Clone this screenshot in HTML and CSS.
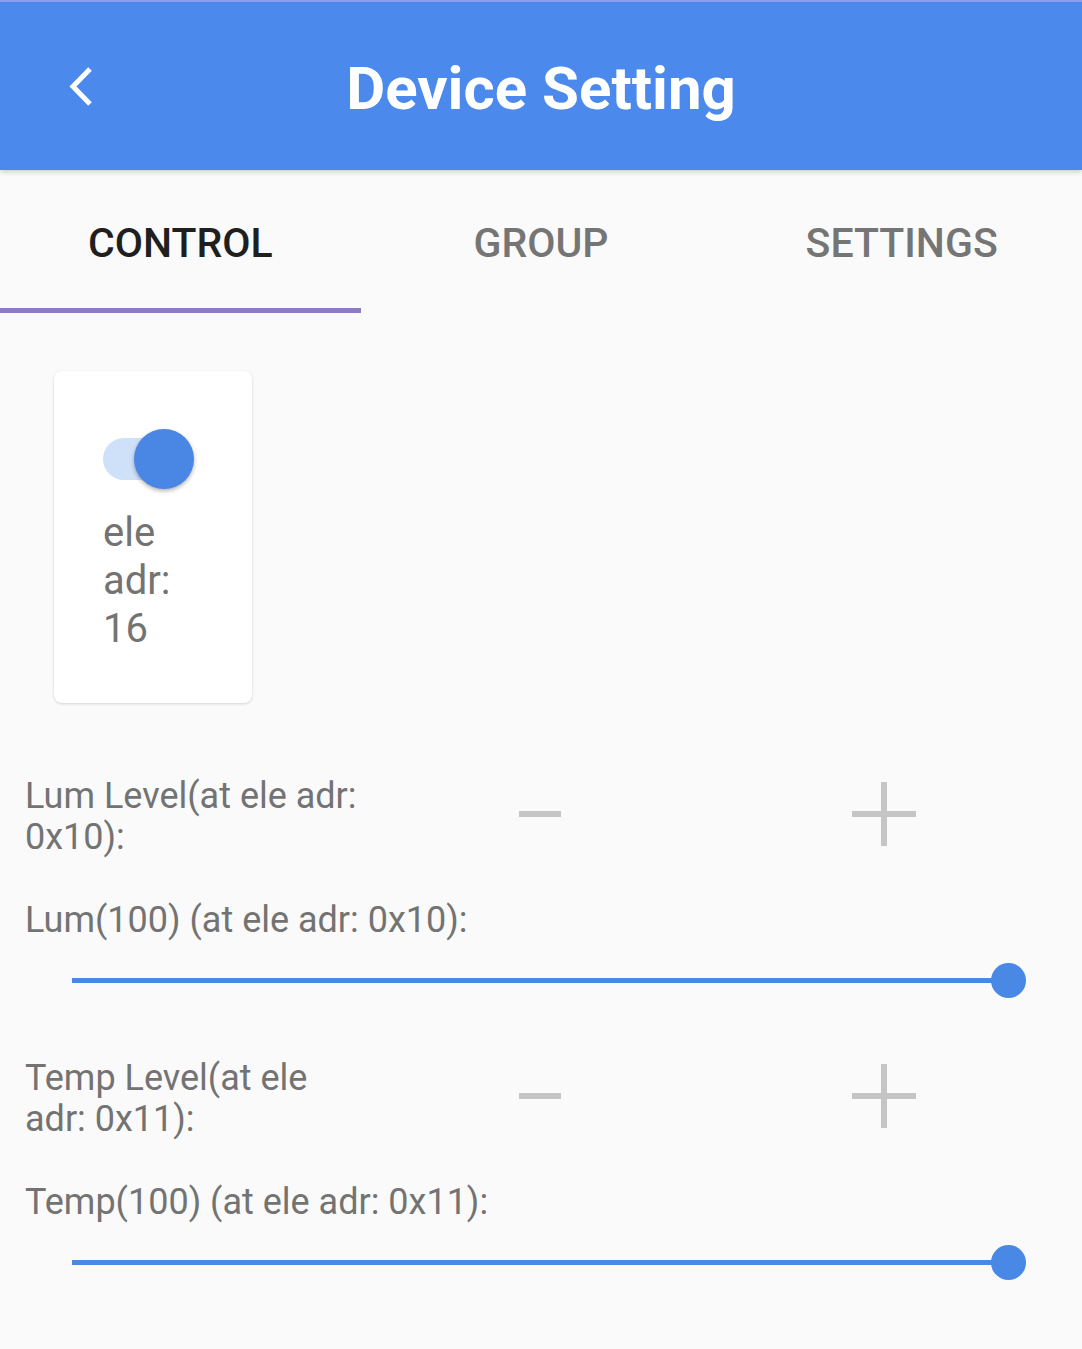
FILE: index.html
```html
<!DOCTYPE html>
<html lang="en">
<head>
  <meta charset="UTF-8">
  <meta content="width=device-width, initial-scale=1.0" name="viewport">
  <title>Device Setting</title>
  <link rel="stylesheet" href="styles.css">
</head>
<body>
<header class="appbar">
  <button class="back" type="button" aria-label="back">
    <svg width="30" height="44" viewBox="0 0 30 44"><path d="M23 4 L6 21.5 L23 39" fill="none" stroke="#fff" stroke-width="5"/></svg>
  </button>
  <h1>Device Setting</h1>
  <span></span>
</header>

<nav class="tabs">
  <a class="tab is-active">CONTROL</a>
  <a class="tab">GROUP</a>
  <a class="tab">SETTINGS</a>
</nav>

<main class="content">
  <div class="element-card">
    <div class="switch">
      <span class="switch-track"></span>
      <span class="switch-thumb"></span>
    </div>
    <p class="element-name">ele<br>adr:<br>16</p>
  </div>

  <section class="level">
    <div class="level-row">
      <p class="label">Lum Level(at ele adr: 0x10):</p>
      <button class="step" type="button" aria-label="minus">
        <svg width="64" height="64" viewBox="0 0 64 64"><rect x="11" y="29" width="42" height="6" fill="#c6c5c6"/></svg>
      </button>
      <button class="step" type="button" aria-label="plus">
        <svg width="64" height="64" viewBox="0 0 64 64"><rect x="0" y="29" width="64" height="6" fill="#c6c5c6"/><rect x="29" y="0" width="6" height="64" fill="#c6c5c6"/></svg>
      </button>
    </div>
    <p class="label value">Lum(100) (at ele adr: 0x10):</p>
    <div class="slider">
      <span class="slider-track"></span>
      <span class="slider-thumb"></span>
    </div>
  </section>

  <section class="level">
    <div class="level-row">
      <p class="label">Temp Level(at ele adr: 0x11):</p>
      <button class="step" type="button" aria-label="minus">
        <svg width="64" height="64" viewBox="0 0 64 64"><rect x="11" y="29" width="42" height="6" fill="#c6c5c6"/></svg>
      </button>
      <button class="step" type="button" aria-label="plus">
        <svg width="64" height="64" viewBox="0 0 64 64"><rect x="0" y="29" width="64" height="6" fill="#c6c5c6"/><rect x="29" y="0" width="6" height="64" fill="#c6c5c6"/></svg>
      </button>
    </div>
    <p class="label value">Temp(100) (at ele adr: 0x11):</p>
    <div class="slider">
      <span class="slider-track"></span>
      <span class="slider-thumb"></span>
    </div>
  </section>
</main>
</body>
</html>
```

FILE: styles.css
```css
* {
  box-sizing: border-box;
}

body {
  background: #fafafa;
  font-family: Roboto, "Noto Sans", sans-serif;
  margin: 0;
}

p {
  margin: 0;
}

button {
  background: transparent;
  border: none;
  padding: 0;
}

.appbar {
  align-items: center;
  background: #4b89ec;
  border-top: 2px solid #8b9ff0;
  box-shadow: 0 2px 5px hwb(0 0% 100% / 0.18);
  display: grid;
  grid-template-columns: 1fr auto 1fr;
  height: 170px;
  position: relative;

  & .back {
    display: flex;
    justify-self: start;
    margin-left: 67px;
    margin-top: 2px;
  }

  & h1 {
    color: #fff;
    font-size: 60px;
    font-weight: 700;
    margin: 4px 0 0;
  }
}

.tabs {
  display: grid;
  grid-template-columns: repeat(3, 1fr);
  height: 143px;

  & .tab {
    align-items: center;
    border-bottom: 5px solid transparent;
    color: #757575;
    display: flex;
    font-size: 41px;
    font-weight: 500;
    justify-content: center;
    padding-top: 8px;
  }

  & .is-active {
    border-bottom-color: #8e7cc3;
    color: #1f1f1f;
  }
}

.content {
  padding: 58px 24px 40px 25px;
}

.element-card {
  background: #fff;
  border-radius: 8px;
  box-shadow: 0 1px 3px hwb(0 0% 100% / 0.16);
  height: 332px;
  margin-left: 29px;
  padding: 58px 0 0 49px;
  width: 198px;
}

.switch {
  align-items: center;
  display: flex;
  height: 60px;

  & .switch-track {
    background: #cfe0f9;
    border-radius: 21px;
    height: 42px;
    width: 82px;
  }

  & .switch-thumb {
    background: #4a86e4;
    border-radius: 50%;
    box-shadow: 0 2px 4px hwb(0 0% 100% / 0.3);
    height: 60px;
    margin-left: -51px;
    width: 60px;
  }
}

.element-name {
  color: #737373;
  font-size: 40px;
  line-height: 48px;
  margin-top: 20px;
}

.level {
  margin-top: 73px;

  & + .level {
    margin-top: 58px;
  }
}

.level-row {
  align-items: center;
  display: grid;
  grid-template-columns: 345px 340px 1fr;
  justify-items: center;

  & .label {
    justify-self: start;
  }

  & .step {
    display: flex;
    margin-bottom: 6px;
  }
}

.label {
  color: #737373;
  font-size: 36px;
  line-height: 41px;
}

.value {
  margin-top: 42px;
}

.slider {
  align-items: center;
  display: flex;
  height: 40px;
  margin-top: 19px;
  padding: 0 32px 0 47px;

  & .slider-track {
    background: #4a88e6;
    flex: 1;
    height: 5px;
  }

  & .slider-thumb {
    background: #4a88e6;
    border-radius: 50%;
    height: 35px;
    margin-left: -17px;
    width: 35px;
  }
}
```
